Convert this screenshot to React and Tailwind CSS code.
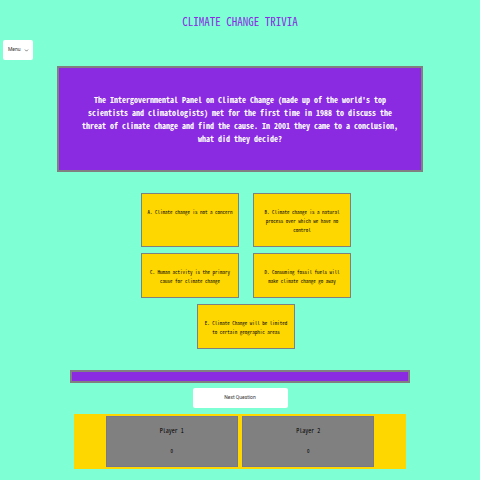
import { ChevronDown } from "lucide-react";

const answers = [
  "A. Climate change is not a concern",
  "B. Climate change is a natural process over which we have no control",
  "C. Human activity is the primary cause for climate change",
  "D. Consuming fossil fuels will make climate change go away",
  "E. Climate Change will be limited to certain geographic areas",
];

function Answer({ text }) {
  return (
    <button
      type="button"
      className="flex min-h-[45px] w-[98px] flex-col items-center border border-[#808080] bg-[#ffd700] px-1 pt-[13px] pb-[12px] text-center text-[5px] leading-[9px] text-black"
    >
      <span className="max-w-[87px]">{text}</span>
    </button>
  );
}

function Player({ name, score }) {
  return (
    <section className="flex w-2/5 flex-col items-center gap-3 border border-[#77778c] bg-[#808080] pt-[10px] pb-[11px] text-black">
      <h2 className="text-[6px] leading-[8px]">{name}</h2>
      <p className="text-[5px] leading-[8px]">{score}</p>
    </section>
  );
}

export default function App() {
  return (
    <main className="min-h-screen bg-[#7fffd4] font-['Noto_Sans_Mono_CJK_SC','Liberation_Mono',monospace]">
      <h1 className="pt-[13px] text-center text-[11px] leading-[16px] text-[#8a2be2]">
        CLIMATE CHANGE TRIVIA
      </h1>
      <nav className="px-[3px] pt-[11px]">
        <button
          type="button"
          className="flex h-5 w-[30px] items-center justify-between rounded-xs bg-white pr-1 pl-[5px] font-['Roboto','Liberation_Sans',sans-serif] text-[5px] text-[#363636]"
        >
          Menu
          <ChevronDown className="size-[5px] shrink-0" strokeWidth={3} />
        </button>
      </nav>
      <section className="mx-[57px] mt-[6px] border-2 border-[#808080] bg-[#8a2be2] px-5 pt-[25px] pb-[25px] text-center text-[8px] leading-[13px] font-bold text-white">
        <p>
          The Intergovernmental Panel on Climate Change (made up of the world's
          top scientists and climatologists) met for the first time in 1988 to
          discuss the threat of climate change and find the cause. In 2001 they
          came to a conclusion, what did they decide?
        </p>
      </section>
      <section className="mt-[21px] flex flex-wrap justify-center gap-x-[14px] gap-y-[6px] pr-[127px] pl-[139px]">
        {answers.map((text) => (
          <Answer key={text} text={text} />
        ))}
      </section>
      <div className="mx-auto mt-[21px] h-[13px] w-[71%] border-2 border-[#808080] bg-[#8a2be2]" />
      <button
        type="button"
        className="mx-auto mt-[5px] block h-5 w-[95px] rounded-xs bg-white text-center font-['Roboto','Liberation_Sans',sans-serif] text-[5px] text-[#363636]"
      >
        Next Question
      </button>
      <div className="mx-auto mt-[6px] flex w-[69%] justify-center gap-1 bg-[#ffd700] py-[2px]">
        <Player name="Player 1" score={0} />
        <Player name="Player 2" score={0} />
      </div>
    </main>
  );
}
